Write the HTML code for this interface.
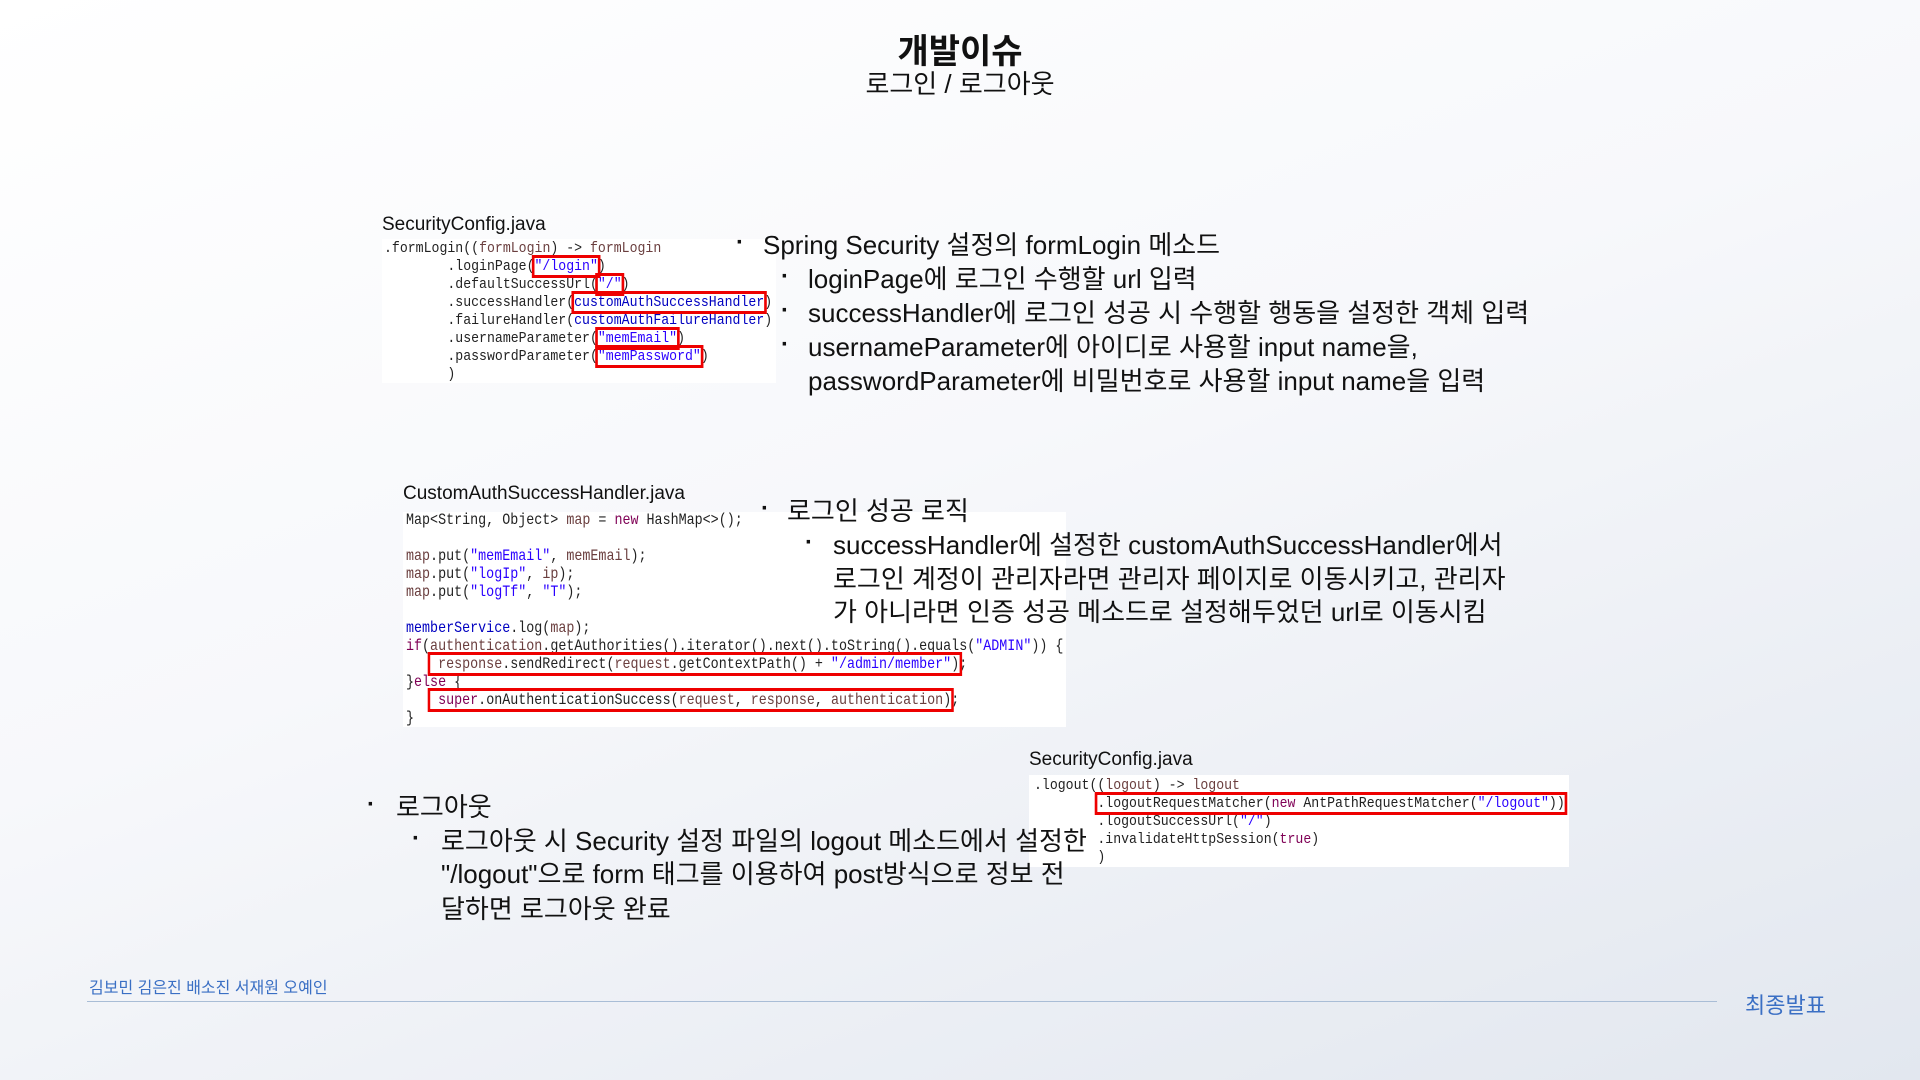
<!DOCTYPE html>
<html><head><meta charset="utf-8"><style>
body{margin:0;width:1920px;height:1080px;overflow:hidden;background:linear-gradient(160deg,#ffffff 0%,#f7f8fb 45%,#e2e7ef 100%);font-family:"Liberation Sans","Noto Sans CJK KR",sans-serif;color:#111;position:relative}
.a{position:absolute;white-space:nowrap}
.code{position:absolute;background:#fff}
.code pre{margin:0;font-family:"Liberation Mono","Noto Sans CJK KR",monospace;font-size:15px;line-height:18px;color:#222;transform-origin:0 0;position:absolute}
.s{color:#2a00ff}.f{color:#0000c0}.v{color:#6a3e3e}.k{color:#7f0055}
.r{outline:3px solid #e00;outline-offset:0}
.t{font-size:26px;line-height:34px}
.ft{font-size:19px}
.dot{font-size:24px;font-weight:bold}
</style></head><body>
<div class="a" style="left:0;width:1920px;text-align:center;top:24px;font-size:34px;font-weight:bold">개발이슈</div>
<div class="a" style="left:0;width:1920px;text-align:center;top:64px;font-size:26px">로그인 / 로그아웃</div>

<div class="a ft" style="left:382px;top:214px">SecurityConfig.java</div>
<div class="code" style="left:382px;top:239px;width:394px;height:144px">
<pre style="left:2px;top:1px;transform:scaleX(0.88)">.formLogin((<span class="v">formLogin</span>) -&gt; <span class="v">formLogin</span>
        .loginPage(<span class="r s">"/login"</span>)
        .defaultSuccessUrl(<span class="r s">"/"</span>)
        .successHandler(<span class="r f">customAuthSuccessHandler</span>)
        .failureHandler(<span class="f">customAuthFailureHandler</span>)
        .usernameParameter(<span class="r s">"memEmail"</span>)
        .passwordParameter(<span class="r s">"memPassword"</span>)
        )</pre></div>

<div class="a dot" style="left:736px;top:229px">·</div>
<div class="a t" style="left:763px;top:228px">Spring Security 설정의 formLogin 메소드</div>
<div class="a dot" style="left:781px;top:263px">·</div>
<div class="a t" style="left:808px;top:262px">loginPage에 로그인 수행할 url 입력</div>
<div class="a dot" style="left:781px;top:297px">·</div>
<div class="a t" style="left:808px;top:296px">successHandler에 로그인 성공 시 수행할 행동을 설정한 객체 입력</div>
<div class="a dot" style="left:781px;top:331px">·</div>
<div class="a t" style="left:808px;top:330px">usernameParameter에 아이디로 사용할 input name을,</div>
<div class="a t" style="left:808px;top:364px">passwordParameter에 비밀번호로 사용할 input name을 입력</div>

<div class="a ft" style="left:403px;top:483px">CustomAuthSuccessHandler.java</div>
<div class="code" style="left:403px;top:512px;width:663px;height:215px">
<pre style="left:3px;top:-1px;font-size:16px;transform:scaleX(0.835)">Map&lt;String, Object&gt; <span class="v">map</span> = <span class="k">new</span> HashMap&lt;&gt;();

<span class="v">map</span>.put(<span class="s">"memEmail"</span>, <span class="v">memEmail</span>);
<span class="v">map</span>.put(<span class="s">"logIp"</span>, <span class="v">ip</span>);
<span class="v">map</span>.put(<span class="s">"logTf"</span>, <span class="s">"T"</span>);

<span class="f">memberService</span>.log(<span class="v">map</span>);
<span class="k">if</span>(<span class="v">authentication</span>.getAuthorities().iterator().next().toString().equals(<span class="s">"ADMIN"</span>)) {
   <span class="r"> <span class="v">response</span>.sendRedirect(<span class="v">request</span>.getContextPath() + <span class="s">"/admin/member"</span>)</span>;
}<span class="k">else</span> {
   <span class="r"> <span class="k">super</span>.onAuthenticationSuccess(<span class="v">request</span>, <span class="v">response</span>, <span class="v">authentication</span>)</span>;
}</pre></div>

<div class="a dot" style="left:761px;top:495px">·</div>
<div class="a t" style="left:787px;top:494px">로그인 성공 로직</div>
<div class="a dot" style="left:805px;top:529px">·</div>
<div class="a t" style="left:833px;top:528px">successHandler에 설정한 customAuthSuccessHandler에서</div>
<div class="a t" style="left:833px;top:562px">로그인 계정이 관리자라면 관리자 페이지로 이동시키고, 관리자</div>
<div class="a t" style="left:833px;top:595px">가 아니라면 인증 성공 메소드로 설정해두었던 url로 이동시킴</div>

<div class="a ft" style="left:1029px;top:749px">SecurityConfig.java</div>
<div class="code" style="left:1029px;top:775px;width:540px;height:92px">
<pre style="left:5px;top:2px;transform:scaleX(0.88)">.logout((<span class="v">logout</span>) -&gt; <span class="v">logout</span>
        <span class="r">.logoutRequestMatcher(<span class="k">new</span> AntPathRequestMatcher(<span class="s">"/logout"</span>))</span>
        .logoutSuccessUrl(<span class="s">"/"</span>)
        .invalidateHttpSession(<span class="k">true</span>)
        )</pre></div>

<div class="a dot" style="left:367px;top:791px">·</div>
<div class="a t" style="left:396px;top:790px">로그아웃</div>
<div class="a dot" style="left:412px;top:825px">·</div>
<div class="a t" style="left:441px;top:824px">로그아웃 시 Security 설정 파일의 logout 메소드에서 설정한</div>
<div class="a t" style="left:441px;top:857px">"/logout"으로 form 태그를 이용하여 post방식으로 정보 전</div>
<div class="a t" style="left:441px;top:892px">달하면 로그아웃 완료</div>

<div class="a" style="left:89px;top:974px;font-size:16px;color:#3a6fc4">김보민 김은진 배소진 서재원 오예인</div>
<div class="a" style="left:87px;top:1001px;width:1630px;height:1px;background:#a9bdd6"></div>
<div class="a" style="left:1745px;top:988px;font-size:22px;color:#3a6fc4">최종발표</div>
</body></html>
